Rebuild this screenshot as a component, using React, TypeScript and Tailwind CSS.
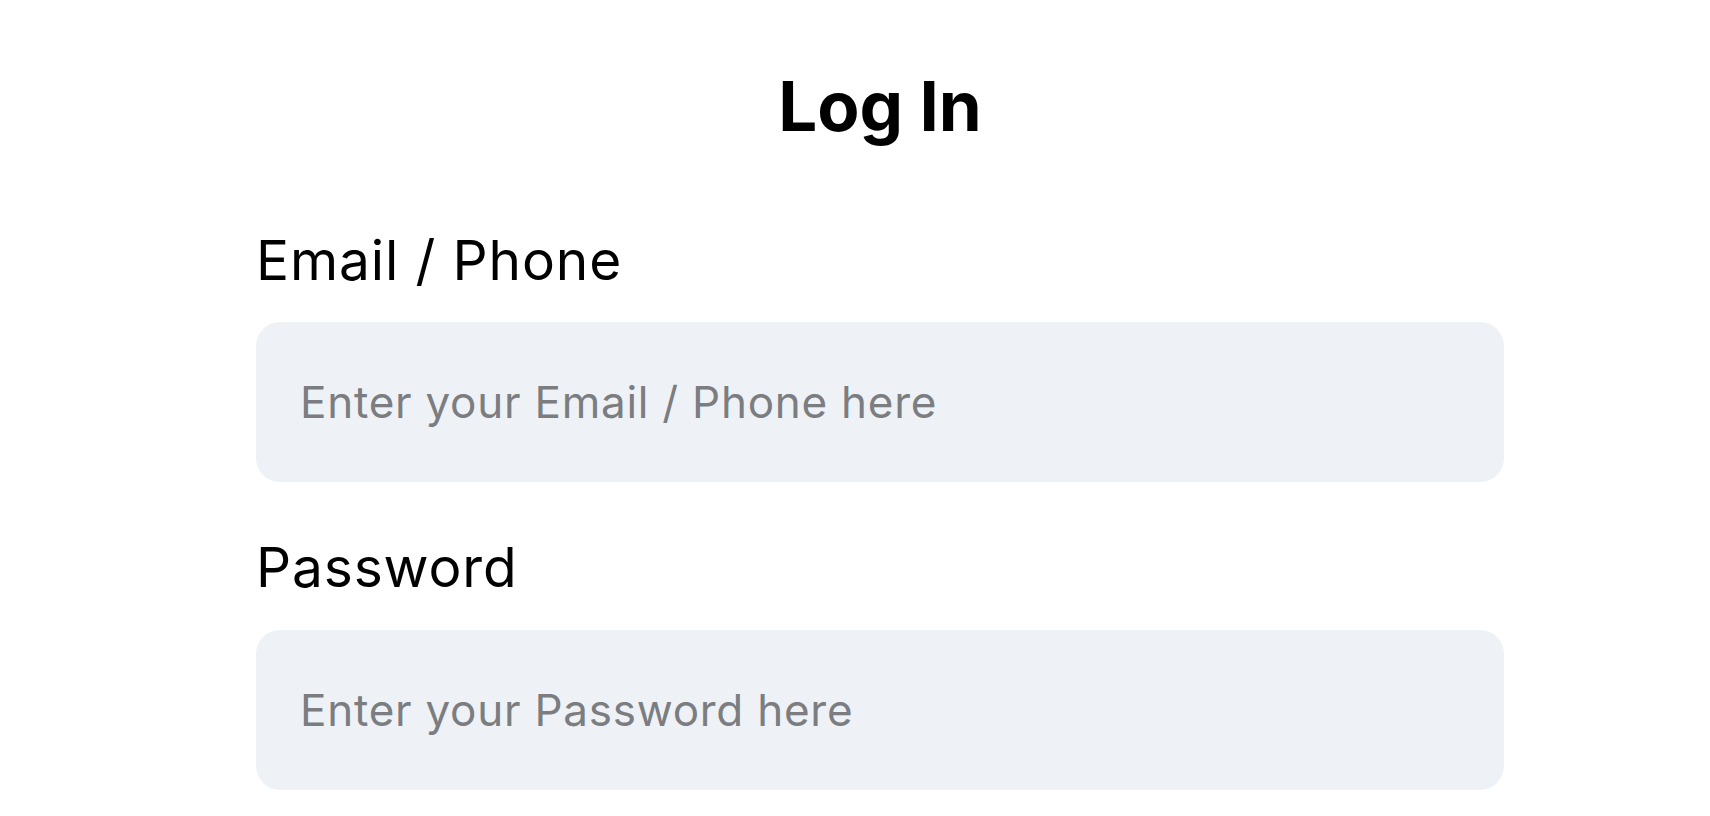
export default function App() {
  return (
    <div className="min-h-screen bg-white font-['Inter',sans-serif] text-black">
      <form className="ml-[256px] w-[1248px] pt-[65px]">
        <h1 className="text-center text-[69px] font-bold leading-[83px]">Log In</h1>

        <label className="mt-[79px] block text-[55px] leading-[66px] tracking-[0.016em]" htmlFor="login">
          Email / Phone
        </label>
        <input
          id="login"
          type="text"
          placeholder="Enter your Email / Phone here"
          className="mt-[29px] block h-[160px] w-full rounded-3xl bg-[#eef2f6] px-[44px] text-[44px] tracking-[0.017em] outline-none placeholder:text-[#7b7d80]"
        />

        <label className="mt-[52px] block text-[55px] leading-[66px] tracking-[0.016em]" htmlFor="password">
          Password
        </label>
        <input
          id="password"
          type="password"
          placeholder="Enter your Password here"
          className="mt-[30px] block h-[160px] w-full rounded-3xl bg-[#eef2f6] px-[44px] text-[44px] tracking-[0.017em] outline-none placeholder:text-[#7b7d80]"
        />
      </form>
    </div>
  );
}
